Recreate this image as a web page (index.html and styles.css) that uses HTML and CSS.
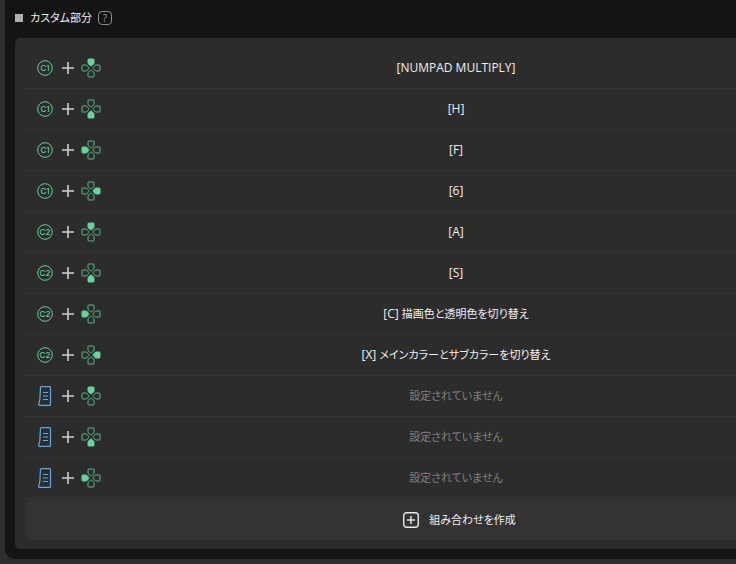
FILE: index.html
```html
<!DOCTYPE html>
<html lang="ja">
<head>
<meta charset="utf-8">
<title>カスタム部分</title>
<link rel="stylesheet" href="styles.css">
</head>
<body>
<svg class="symbols" aria-hidden="true">
  <symbol id="petal" viewBox="0 0 20 20"><path d="M7.800 1h4.400q.8 0 .8.8v3.700L10.600 7.700q-.6.5-1.200 0L7 5.500V1.800q0-.8.8-.8z"/></symbol>
  <symbol id="ring" viewBox="0 0 16 16"><circle cx="8" cy="8" r="7.3"/></symbol>
  <symbol id="plus" viewBox="0 0 12 12"><path d="M6 0v12M0 6h12"/></symbol>
  <symbol id="strip" viewBox="0 0 16 20"><path d="M4.500.6h8q1 0 1 1v16.800q0 1-1 1H2.500q-1.100 0-.9-1L2.800 14 3.500 1.600q0-1 1-1zM6 6.500h5M6 10h5M6 13.500h5"/></symbol>
</svg>
<main class="section">
  <header class="heading">
    <span class="marker"></span>
    <h1>カスタム部分</h1>
    <button class="help" type="button" aria-label="ヘルプ">?</button>
  </header>
  <div class="panel">
    <ul class="combos" id="combos"></ul>
    <button class="create" type="button">
      <svg class="create-icon" viewBox="0 0 16 16" aria-hidden="true"><rect x=".7" y=".7" width="14.600" height="14.600" rx="3"/><path d="M8 4v8M4 8h8"/></svg>
      <span>組み合わせを作成</span>
    </button>
  </div>
</main>
<script src="app.js"></script>
</body>
</html>
```
FILE: styles.css
```css
* { box-sizing: border-box; }

body {
  margin: 0;
  padding-left: 5px;
  background: #2d2d2d;
  color: #f0f0f0;
  font: 12px/16px "Open Sans", "Noto Sans CJK JP", sans-serif;
  font-feature-settings: "palt";
}

button {
  border: 0;
  color: inherit;
  font: inherit;
  font-feature-settings: inherit;
}

.symbols { position: absolute; width: 0; height: 0; }

.section {
  padding: 0 0 10px 10px;
  border-bottom-left-radius: 10px;
  background: #141414;
}

.heading {
  display: flex;
  align-items: center;
  height: 38px;
  padding-bottom: 3px;
}

.marker { width: 8px; height: 8px; background: #b0b0b0; }

h1 { margin: 0 6px 0 7px; font-size: 11px; font-weight: 400; }

.help {
  width: 14px;
  height: 14px;
  padding: 0;
  border: 1px solid #8c8c8c;
  border-radius: 4px;
  background: none;
  color: #a0a0a0;
  font-size: 10px;
  line-height: 12px;
}

.panel {
  padding: 10px 0 9px 10px;
  border-radius: 5px 0 0 5px;
  background: #2c2c2c;
}

.combos { margin: 0; padding: 0; list-style: none; }

.combo {
  display: grid;
  grid-template-columns: 151px 1fr;
  align-items: center;
  height: 41px;
  border-bottom: 1px solid #343434;
  text-align: center;
}

.keys { display: flex; align-items: center; padding-left: 12px; }

.keys svg { flex: none; fill: none; }

.cap { width: 16px; height: 16px; stroke: #66cf9b; }
.cap text { fill: #66cf9b; stroke: none; font: 500 8px Inter, sans-serif; text-anchor: middle; }
.strip { width: 16px; height: 20px; stroke: #62a8e5; stroke-width: 1.2; }
.plus { width: 12px; height: 12px; margin: 0 7px 0 9px; stroke: #d0d0d0; stroke-width: 1.6; }
.dpad { width: 20px; height: 20px; stroke: #5ab98a; }
.dpad .pressed { fill: #66d49d; stroke: #66d49d; }

.ja { font-size: 11px; }
.unset { color: #808080; }

.create {
  display: flex;
  align-items: center;
  justify-content: center;
  gap: 10px;
  width: 100%;
  height: 40px;
  margin-top: 1px;
  padding: 0 0 0 158px;
  border-radius: 8px 0 0 8px;
  background: #333333;
  font-size: 11px;
}

.create-icon { width: 16px; height: 16px; fill: none; stroke: #e8e8e8; stroke-width: 1.4; }
```
FILE: app.js
```js
const UNSET = "設定されていません";
const combos = [
  ["C1", "up", "[NUMPAD MULTIPLY]"],
  ["C1", "down", "[H]"],
  ["C1", "left", "[F]"],
  ["C1", "right", "[6]"],
  ["C2", "up", "[A]"],
  ["C2", "down", "[S]"],
  ["C2", "left", "[C]", "描画色と透明色を切り替え"],
  ["C2", "right", "[X]", "メインカラーとサブカラーを切り替え"],
  ["strip", "up", ""],
  ["strip", "down", ""],
  ["strip", "left", ""],
];
const angles = { up: 0, right: 90, down: 180, left: 270 };

function keyIcon(key) {
  if (key === "strip") return '<svg class="strip"><use href="#strip"/></svg>';
  return `<svg class="cap" viewBox="0 0 16 16"><use href="#ring"/><text x="8" y="11">${key}</text></svg>`;
}

function dpad(direction) {
  const order = Object.keys(angles).filter((name) => name !== direction).concat(direction);
  const petals = order.map((name) =>
    `<use href="#petal" class="${name === direction ? "pressed" : ""}" transform="rotate(${angles[name]} 10 10)"/>`);
  return `<svg class="dpad" viewBox="0 0 20 20">${petals.join("")}</svg>`;
}

function label(shortcut, action) {
  if (!shortcut) return `<span class="ja unset">${UNSET}</span>`;
  return `<span>${shortcut}${action ? ` <span class="ja">${action}</span>` : ""}</span>`;
}

document.getElementById("combos").innerHTML = combos.map(([key, direction, shortcut, action]) => `
  <li class="combo">
    <span class="keys">${keyIcon(key)}<svg class="plus"><use href="#plus"/></svg>${dpad(direction)}</span>
    ${label(shortcut, action)}
  </li>`).join("");
```
